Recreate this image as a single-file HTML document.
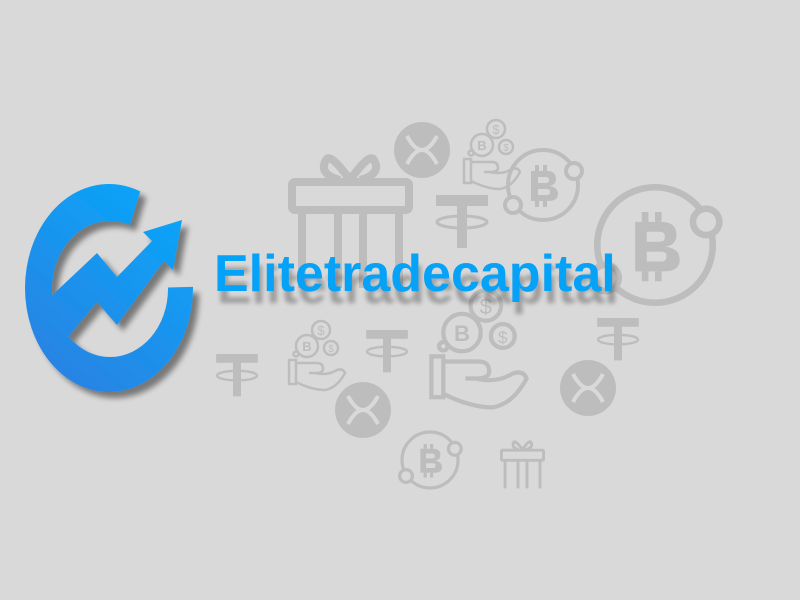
<!DOCTYPE html>
<html><head><meta charset="utf-8"><style>
html,body{margin:0;padding:0;width:800px;height:600px;overflow:hidden;background:#d9d9d9}
svg{position:absolute;left:0;top:0}
.t{position:absolute;left:214px;top:244px;font:bold 52px "Liberation Sans",sans-serif;color:#06a2f8;letter-spacing:0;text-shadow:3px 12px 4px rgba(0,0,0,.28);white-space:nowrap}
</style></head><body>
<svg width="800" height="600" viewBox="0 0 800 600">
<defs>
<g id="xrp">
<circle r="28" fill="#bdbdbd"/>
<path d="M-15,-14 Q0,14 15,-14 M-15,14 Q0,-14 15,14" fill="none" stroke="#d9d9d9" stroke-width="4"/>
</g>
<g id="btcB">
<path d="M-12,-14 H4 Q13,-14 13,-6 Q13,0 6,1 Q15,2 15,9 Q15,16 5,16 H-12 Z M-5,-8 V-2 H3 Q6,-2 6,-5 Q6,-8 3,-8 Z M-5,4 V10 H4 Q7,10 7,7 Q7,4 4,4 Z" fill="#bdbdbd" fill-rule="evenodd"/>
<path d="M-6,-20 V-14 M2,-20 V-14 M-6,16 V22 M2,16 V22" stroke="#bdbdbd" stroke-width="4"/>
</g>
<g id="orbit">
<circle r="35" fill="none" stroke="#bdbdbd" stroke-width="4"/>
<circle cx="31" cy="-14" r="8" fill="#d9d9d9" stroke="#bdbdbd" stroke-width="4"/>
<circle cx="-30" cy="20" r="8" fill="#d9d9d9" stroke="#bdbdbd" stroke-width="4"/>
<use href="#btcB"/>
</g>
<g id="tether">
<rect x="-26" y="-25" width="52" height="11" fill="#bdbdbd"/>
<rect x="-5" y="-15" width="10" height="43" fill="#bdbdbd"/>
<ellipse cx="0" cy="2" rx="25" ry="6" fill="none" stroke="#bdbdbd" stroke-width="3"/>
</g>
<g id="gift">
<g fill="none" stroke="#bdbdbd" stroke-width="8" stroke-linejoin="round">
<rect x="4" y="34" width="117" height="28" rx="3"/>
<path d="M14,62 V140 M111,62 V140 M50,62 V140 M75,62 V140"/>
<path d="M62,32 Q42,4 38,12 Q30,26 52,32 M62,32 Q82,4 86,12 Q94,26 72,32"/>
</g>
</g>
<g id="hand">
<g fill="none" stroke="#bdbdbd" stroke-width="2.5">
<rect x="2" y="42" width="7" height="24"/>
<path d="M9,45 H30 Q36,45 36,51 Q36,55 28,55 H22 M28,55 Q40,58 50,52 Q56,50 58,55 Q50,70 38,72 Q25,72 9,64"/>
<circle cx="20" cy="28" r="11"/><circle cx="34" cy="12" r="9"/><circle cx="44" cy="30" r="7"/>
<circle cx="9" cy="36" r="2.5"/>
</g>
<text x="20" y="33" font-family="Liberation Sans" font-weight="bold" font-size="13" fill="#bdbdbd" text-anchor="middle">B</text>
<text x="34" y="17" font-family="Liberation Sans" font-size="13" fill="#bdbdbd" text-anchor="middle">$</text>
<text x="44" y="34" font-family="Liberation Sans" font-size="10" fill="#bdbdbd" text-anchor="middle">$</text>
</g>
<linearGradient id="lg" gradientUnits="userSpaceOnUse" x1="30" y1="390" x2="190" y2="190"><stop offset="0" stop-color="#2d7fe0"/><stop offset="1" stop-color="#06a8fb"/></linearGradient>
<filter id="sh" x="-20%" y="-20%" width="150%" height="150%"><feGaussianBlur in="SourceAlpha" stdDeviation="3"/><feOffset dx="6" dy="6"/><feComponentTransfer><feFuncA type="linear" slope="0.45"/></feComponentTransfer><feMerge><feMergeNode/><feMergeNode in="SourceGraphic"/></feMerge></filter>
<mask id="cm"><rect width="800" height="600" fill="#fff"/><polygon points="110,289 150,160 300,160 300,284" fill="#000"/></mask>
</defs>

<use href="#gift" transform="translate(288,148)"/>
<use href="#xrp" transform="translate(422,150)"/>
<use href="#hand" transform="translate(462,117)"/>
<use href="#orbit" transform="translate(543,185)"/>
<use href="#orbit" transform="translate(655,245) scale(1.65)"/>
<use href="#tether" transform="translate(462,220)"/>
<use href="#tether" transform="translate(237,374) scale(0.8)"/>
<use href="#hand" transform="translate(287,318)"/>
<use href="#tether" transform="translate(387,350) scale(0.8)"/>
<use href="#hand" transform="translate(428,285) scale(1.7)"/>
<use href="#tether" transform="translate(618,338) scale(0.8)"/>
<use href="#xrp" transform="translate(363,410)"/>
<use href="#xrp" transform="translate(588,388)"/>
<use href="#orbit" transform="translate(430,460) scale(0.8)"/>
<use href="#gift" transform="translate(500,438) scale(0.36)"/>

<g filter="url(#sh)">
<path mask="url(#cm)" fill="url(#lg)" fill-rule="evenodd" d="M25,288 A84,104 0 1 0 193,288 A84,104 0 1 0 25,288 Z M52,289 A58,68 0 1 0 168,289 A58,68 0 1 0 52,289 Z"/>
<polygon fill="url(#lg)" points="45,302 97,253 117,277 152,241 143,232 182,220 173,270 164,261 117,325 97,302 64,342"/>
</g>
</svg>
<div class="t">Elitetradecapital</div>
</body></html>
